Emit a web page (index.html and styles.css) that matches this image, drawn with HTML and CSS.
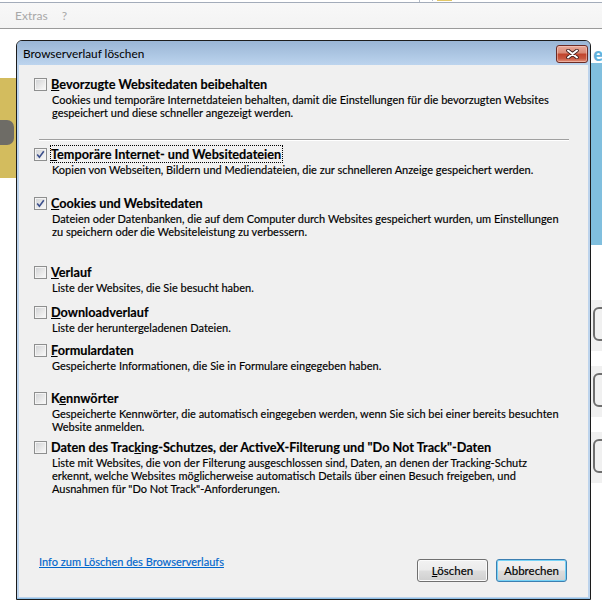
FILE: index.html
```html
<html>
<head>
  <meta charset="utf-8">
  <link rel="stylesheet" href="styles.css">
</head>

<body>
  <div class="topstrip">
    <div class="addr"></div>
    <div class="tab"></div>
  </div>
  <div class="menubar">
    <span>Extras</span>
    <span>?</span>
  </div>

  <div class="page">
    <div class="side-left">
      <div class="promo">
        <div class="promo-knob"></div>
      </div>
    </div>
    <div class="page-main"></div>
    <div class="side-right">
      <div class="side-letter">e</div>
      <div class="side-blue"></div>
      <div class="side-box first"><div class="side-frame"></div></div>
      <div class="side-box"><div class="side-frame"></div></div>
      <div class="side-box"><div class="side-frame"></div></div>
    </div>
  </div>

  <div class="dialog">
    <div class="titlebar">
      <span class="title">Browserverlauf löschen</span>
      <button class="close">
        <svg width="13" height="10" viewBox="0 0 13 10">
          <path d="M2 1.5 L11 8.5 M11 1.5 L2 8.5" stroke="#3d1d1d" stroke-width="3.6" stroke-linecap="round"/>
          <path d="M2 1.5 L11 8.5 M11 1.5 L2 8.5" stroke="#fff" stroke-width="2" stroke-linecap="round"/>
        </svg>
      </button>
    </div>

    <div class="client">
      <div class="item i1">
        <span class="cb"></span>
        <div class="label"><u>B</u>evorzugte Websitedaten beibehalten</div>
        <div class="desc">Cookies und temporäre Internetdateien behalten, damit die Einstellungen für die bevorzugten Websites<br>gespeichert und diese schneller angezeigt werden.</div>
      </div>

      <div class="sep"></div>

      <div class="item i2">
        <span class="cb checked">
          <svg width="9" height="9" viewBox="0 0 9 9"><path d="M1.2 4.6 L3.4 7.2 L7.8 1.2" fill="none" stroke="#3b4f8c" stroke-width="1.6"/></svg>
        </span>
        <div class="label"><span class="focus"><u>T</u>emporäre Internet- und Websitedateien</span></div>
        <div class="desc">Kopien von Webseiten, Bildern und Mediendateien, die zur schnelleren Anzeige gespeichert werden.</div>
      </div>

      <div class="item i3">
        <span class="cb checked">
          <svg width="9" height="9" viewBox="0 0 9 9"><path d="M1.2 4.6 L3.4 7.2 L7.8 1.2" fill="none" stroke="#3b4f8c" stroke-width="1.6"/></svg>
        </span>
        <div class="label"><u>C</u>ookies und Websitedaten</div>
        <div class="desc">Dateien oder Datenbanken, die auf dem Computer durch Websites gespeichert wurden, um Einstellungen<br>zu speichern oder die Websiteleistung zu verbessern.</div>
      </div>

      <div class="item i4">
        <span class="cb"></span>
        <div class="label"><u>V</u>erlauf</div>
        <div class="desc">Liste der Websites, die Sie besucht haben.</div>
      </div>

      <div class="item i5">
        <span class="cb"></span>
        <div class="label"><u>D</u>ownloadverlauf</div>
        <div class="desc">Liste der heruntergeladenen Dateien.</div>
      </div>

      <div class="item i6">
        <span class="cb"></span>
        <div class="label"><u>F</u>ormulardaten</div>
        <div class="desc">Gespeicherte Informationen, die Sie in Formulare eingegeben haben.</div>
      </div>

      <div class="item i7">
        <span class="cb"></span>
        <div class="label">K<u>e</u>nnwörter</div>
        <div class="desc">Gespeicherte Kennwörter, die automatisch eingegeben werden, wenn Sie sich bei einer bereits besuchten<br>Website anmelden.</div>
      </div>

      <div class="item i8">
        <span class="cb"></span>
        <div class="label">Daten des Trac<u>k</u>ing-Schutzes, der ActiveX-Filterung und "Do Not Track"-Daten</div>
        <div class="desc">Liste mit Websites, die von der Filterung ausgeschlossen sind, Daten, an denen der Tracking-Schutz<br>erkennt, welche Websites möglicherweise automatisch Details über einen Besuch freigeben, und<br>Ausnahmen für "Do Not Track"-Anforderungen.</div>
      </div>

      <div class="footer">
        <a class="info" href="#">Info zum Löschen des Browserverlaufs</a>
        <div class="buttons">
          <button class="btn"><u>L</u>öschen</button>
          <button class="btn default">Abbrechen</button>
        </div>
      </div>
    </div>
  </div>
</body>

</html>
```

FILE: styles.css
```css
body {
  margin: 0;
  background: #fff;
  font-family: Lato, sans-serif;
  font-size: 11px;
  color: #000;
  width: 602px;
  height: 615px;
  overflow: hidden;
}

.topstrip {
  height: 2px;
  border-bottom: 1px solid #a3acba;
  background: #fff;
  display: flex;
}

.addr {
  width: 419px;
  border-right: 1px solid #b4bcc8;
}

.tab {
  width: 15px;
  height: 1px;
  margin-left: 12px;
  border-left: 1px solid #b4bcc8;
  padding-left: 4px;
  background: #e2c767;
  background-clip: content-box;
}

.menubar {
  height: 25px;
  border-bottom: 1px solid #9a9a9a;
  background: linear-gradient(to bottom, #f8f8f8 0%, #f3f3f3 100%);
  display: flex;
  align-items: center;
  gap: 14px;
  padding-left: 15px;
  color: #a8a8a8;
  font-size: 12px;
}

/* page behind the dialog */
.page {
  display: flex;
  height: 586px;
}

.side-left {
  width: 16px;
}

.promo {
  margin-top: 49px;
  height: 100px;
  background: #d3bc5e;
  padding-top: 42px;
  box-sizing: border-box;
  overflow: hidden;
}

.promo-knob {
  width: 24px;
  height: 25px;
  margin-left: -10px;
  border-radius: 7px;
  background: #6e6c66;
}

.page-main {
  flex: 1;
}

.side-right {
  width: 11px;
  overflow: hidden;
}

.side-letter {
  height: 34px;
  padding-left: 2px;
  padding-top: 19px;
  box-sizing: border-box;
  font-family: "Open Sans", sans-serif;
  font-weight: bold;
  font-size: 17px;
  line-height: 14px;
  color: #63b2dc;
}

.side-blue {
  height: 182px;
  background: #80bfde;
}

.side-box {
  margin-top: 15px;
  height: 51px;
  background: #f0f0f0;
  padding-top: 7px;
  padding-left: 2px;
  box-sizing: border-box;
}

.side-box.first {
  margin-top: 55px;
}

.side-frame {
  width: 20px;
  height: 34px;
  border: 2px solid #6f6f6f;
  border-radius: 6px;
  box-sizing: border-box;
}

/* dialog window */
.dialog {
  position: absolute;
  left: 16px;
  top: 40px;
  width: 575px;
  height: 560px;
  box-sizing: border-box;
  border: 1px solid #1c1c1c;
  border-radius: 6px 6px 0 0;
  background: #bcd3ec;
  display: flex;
  flex-direction: column;
  padding: 0 2px 2px 2px;
  box-shadow: inset 0 -1px 0 #8fbfe6;
}

.titlebar {
  height: 24px;
  margin: 0 -2px;
  border-radius: 5px 5px 0 0;
  background: linear-gradient(to bottom, #9ab6d6 0%, #a9c3e0 45%, #bcd4ee 100%);
  display: flex;
  justify-content: space-between;
  align-items: flex-start;
}

.title {
  padding-left: 6px;
  line-height: 26px;
  font-size: 11.8px;
}

.close {
  width: 32px;
  height: 18px;
  margin-top: 4px;
  margin-right: 2px;
  padding: 0;
  border: 1px solid #6b2b25;
  border-radius: 3px;
  background: linear-gradient(to bottom, #e9a898 0%, #d98a76 42%, #c1452d 52%, #c85840 78%, #e39580 100%);
  box-shadow: inset 0 0 0 1px rgba(255, 220, 210, 0.45);
  display: flex;
  align-items: center;
  justify-content: center;
}

.client {
  flex: 1;
  background: #f0f0f0;
  display: flex;
  flex-direction: column;
  padding-top: 11px;
  -webkit-text-stroke: 0.15px #000;
}

.item {
  display: grid;
  grid-template-columns: 13px auto;
  column-gap: 3px;
  padding-left: 15px;
  white-space: nowrap;
}

.cb {
  width: 13px;
  height: 13px;
  box-sizing: border-box;
  margin-top: 2px;
  border: 1px solid #8e8f8f;
  background: linear-gradient(135deg, #cfd1d4 0%, #e8e8e8 55%, #fbfbfb 100%);
  box-shadow: inset 0 0 0 1px #f4f4f4;
  display: flex;
  align-items: center;
  justify-content: center;
}

.label {
  height: 16px;
  line-height: 16px;
  font-weight: bold;
  font-size: 12.7px;
  padding-left: 1px;
}

.focus {
  outline: 1px dotted #000;
  outline-offset: 0;
  padding: 0 1px 0 0;
}

.desc {
  grid-column: 2;
  padding-top: 1px;
  padding-left: 2px;
  line-height: 13px;
}

.sep {
  margin: 20px 19px 5px 20px;
  height: 1px;
  background: #a0a0a0;
  border-bottom: 1px solid #fff;
}

.i3 { margin-top: 19px; }
.i4 { margin-top: 26px; }
.i5 { margin-top: 10px; }
.i6 { margin-top: 8px; }
.i7 { margin-top: 18px; }
.i8 { margin-top: 6px; }

.footer {
  margin-top: auto;
  display: flex;
  justify-content: space-between;
  align-items: flex-start;
  padding: 0 21px 15px 20px;
}

.info {
  color: #0066cc;
  line-height: 14px;
  -webkit-text-stroke: 0.15px #0066cc;
}

.buttons {
  display: flex;
  gap: 8px;
  margin-top: 4px;
}

.btn {
  width: 71px;
  height: 23px;
  padding: 0;
  border: 1px solid #707070;
  border-radius: 3px;
  background: linear-gradient(to bottom, #f2f2f2 0%, #ebebeb 48%, #dddddd 52%, #cfcfcf 100%);
  box-shadow: inset 0 0 0 1px #fbfbfb;
  font-family: Lato, sans-serif;
  font-size: 11.5px;
  color: #000;
}

.btn.default {
  border-color: #3c7fb1;
  box-shadow: inset 0 0 0 1px #76d3f7;
}
```
